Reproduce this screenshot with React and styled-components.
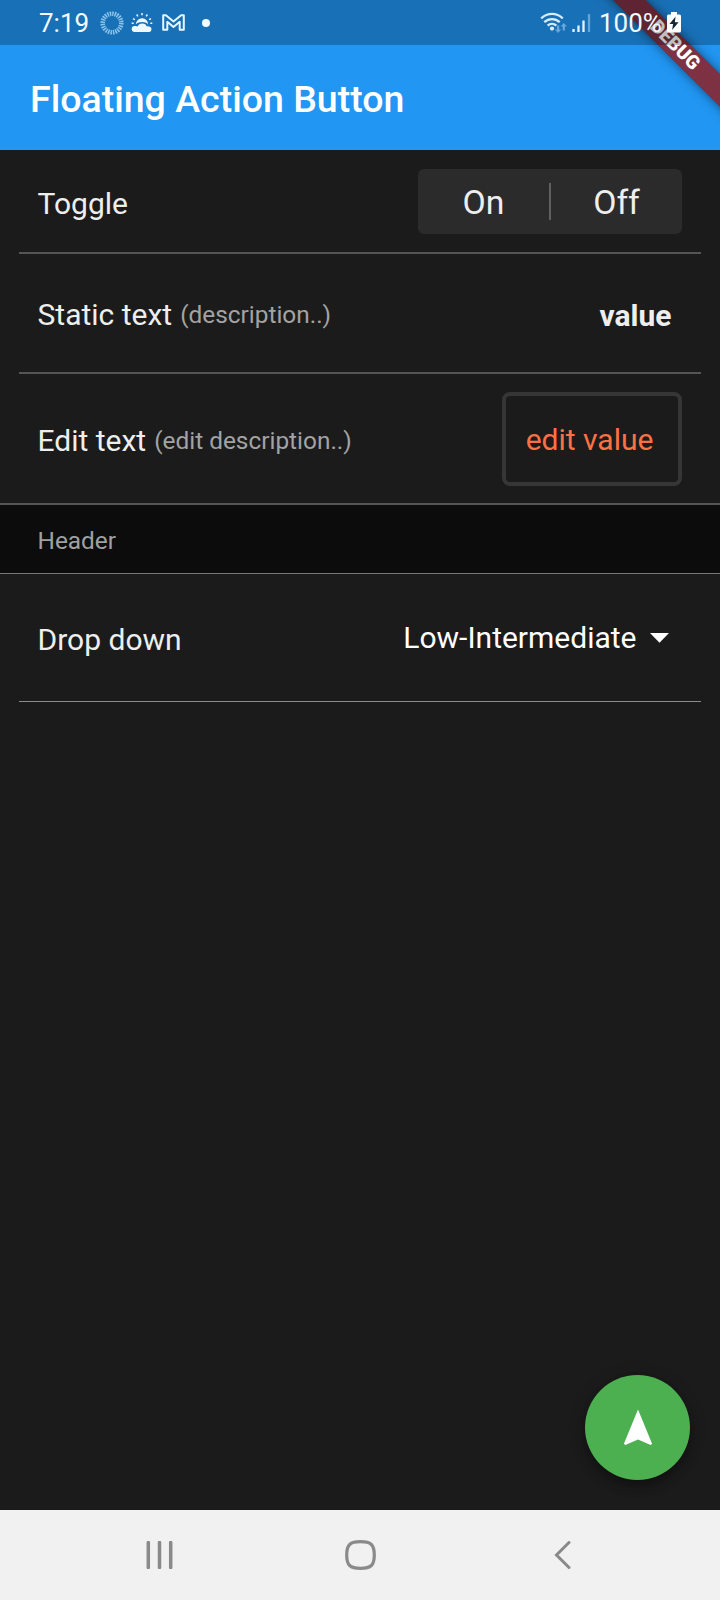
import React from "react";
import styled, { createGlobalStyle } from "styled-components";

const GlobalStyle = createGlobalStyle`
  * { box-sizing: border-box; }
  body {
    margin: 0;
    background: #1b1b1b;
    font-family: Roboto, "Liberation Sans", sans-serif;
  }
`;

const Screen = styled.div`
  width: 720px;
  height: 1600px;
  display: flex;
  flex-direction: column;
  background: #1b1b1b;
  color: #eee;
  overflow: hidden;
`;

const Header = styled.header`
  position: relative;
  height: 150px;
  flex: none;
  background: #2196f3;
  overflow: hidden;
`;

const StatusBar = styled.div`
  position: relative;
  z-index: 2;
  height: 45px;
  padding: 0 39px 0 39px;
  display: flex;
  justify-content: space-between;
  align-items: center;
  background: rgba(0, 0, 0, 0.25);
  color: #f2faff;
`;

const StatusGroup = styled.div`
  display: flex;
  align-items: center;
  height: 45px;
`;

const StatusText = styled.span`
  font-size: 26px;
  line-height: 46px;
  width: ${(p) => p.$width};
  margin-left: ${(p) => p.$gap || 0}px;
  white-space: nowrap;
`;

const Icon = styled.svg`
  display: block;
  flex: none;
  margin-left: ${(p) => p.$gap || 0}px;
`;

const Title = styled.h1`
  margin: 0;
  padding-left: 30px;
  font-size: 37.5px;
  font-weight: 500;
  line-height: 108px;
  color: #fff;
`;

const Banner = styled.div`
  position: absolute;
  z-index: 1;
  left: 575px;
  top: 34px;
  width: 200px;
  height: 22.5px;
  transform: rotate(45deg);
  background: linear-gradient(rgba(183, 28, 28, 0.66), rgba(183, 28, 28, 0.66)), rgba(0, 0, 0, 0.4);
  box-shadow: 0 0 11px rgba(0, 0, 0, 0.5);
  color: #fff;
  font-size: 19.1px;
  font-weight: 900;
  line-height: 22.5px;
  text-align: center;
`;

const Main = styled.main`
  flex: 1;
  display: flex;
  flex-direction: column;
`;

const Row = styled.div`
  height: ${(p) => p.$height}px;
  flex: none;
  margin: 0 ${(p) => (p.$full ? 0 : 19)}px;
  padding: ${(p) => (p.$full ? "0 38px 0 37.5px" : "0 19px 0 18.5px")};
  display: flex;
  justify-content: space-between;
  align-items: center;
  border-bottom: ${(p) => p.$line || "2px solid #555"};
`;

const Label = styled.span`
  font-size: 30px;
  line-height: 36px;
  padding-top: ${(p) => p.$drop || 0}px;
  white-space: nowrap;
`;

const Description = styled.small`
  position: relative;
  top: -2px;
  margin-left: 8px;
  font-size: 24.4px;
  color: #a3a3a3;
`;

const Toggle = styled.div`
  width: 264px;
  height: 65px;
  display: flex;
  align-items: center;
  border-radius: 6px;
  background: #2b2b2b;
`;

const ToggleOption = styled.button`
  width: ${(p) => p.$width}px;
  padding: 3px 0 0;
  border: 0;
  background: none;
  color: #eee;
  text-align: center;
  font: 33.75px/40px Roboto, "Liberation Sans", sans-serif;
`;

const ToggleDivider = styled.i`
  width: 2px;
  height: 37px;
  background: #606060;
`;

const Value = styled.strong`
  font-size: 30px;
  font-weight: 700;
  line-height: 36px;
  padding: 5px 10.5px 0 0;
`;

const EditBox = styled.div`
  width: 180px;
  height: 94px;
  display: flex;
  align-items: center;
  justify-content: center;
  padding: 2px 5px 0 0;
  border: 4px solid #363636;
  border-radius: 8px;
  color: #ff7043;
  font-size: 30px;
  line-height: 36px;
  white-space: nowrap;
`;

const SectionHeader = styled.h2`
  height: 69px;
  flex: none;
  margin: 0;
  padding: 3px 37.5px 0;
  border-bottom: 1px solid #777;
  background: #0c0c0c;
  color: #a0a0a0;
  font-size: 24.4px;
  font-weight: 400;
  line-height: 66px;
`;

const Select = styled.div`
  display: flex;
  align-items: center;
  padding: 0 13px 0 0;
  color: #fff;
`;

const Fab = styled.button`
  margin: auto 30px 30px auto;
  width: 105px;
  height: 105px;
  border: 0;
  border-radius: 50%;
  padding: 0 0 1px;
  display: grid;
  place-items: center;
  background: #4caf50;
  box-shadow: 0 7px 10px rgba(0, 0, 0, 0.25), 0 2px 18px rgba(0, 0, 0, 0.16);
`;

const NavBar = styled.nav`
  height: 90px;
  flex: none;
  padding: 0 149px 0 146px;
  display: grid;
  grid-template-columns: 1fr 31px 390px;
  grid-template-columns: 199px 31px 1fr;
  align-items: center;
  justify-items: start;
  background: #f1f1f1;

  > :last-child {
    justify-self: end;
  }
`;

const RingIcon = () => (
  <Icon width="24" height="24" viewBox="0 0 24 24" $gap={10.5}>
    <circle cx="12" cy="12" r="9.3" fill="none" stroke="#8cc4ea" strokeWidth="4.6" strokeDasharray="1.5 0.93" />
  </Icon>
);

const WeatherIcon = () => (
  <Icon width="22" height="22" viewBox="0 0 22 22" fill="#eef8ff" $gap={7.5}>
    <path d="M3.500 20a3 3 0 0 1 .4-6c1-.2 2 0 2.700.4.900-2 2.400-3 4.700-3s3.900 1.200 4.500 3c2.700-.2 4.700.8 4.700 2.800S19.200 20 17 20Z" />
    <path d="M4.800 12.200a6.200 6.200 0 0 1 12.400 .5c-1-1.800-3-2.700-5.900-2.700-2.600 0-4.900.7-6.500 2.200Z" />
    <g stroke="#eef8ff" strokeWidth="1.500">
      <path d="M11 1v2.300M5.700 2.500l1.100 1.800M16.300 2.500l-1.100 1.800M2 6.700l1.900 1M20 6.700l-1.900 1M.7 11.300h2M19.300 11.300h2" />
    </g>
  </Icon>
);

const MailIcon = () => (
  <Icon width="23" height="19" viewBox="0 0 23 19" $gap={9}>
    <path d="M1.200 16.700V2.200h2.700l7.600 6.200 7.600-6.200h2.700v14.500h-4.100V8.800l-6.200 5.100-6.200-5.100v7.900Z" fill="none" stroke="#e6f5ff" strokeWidth="2" strokeLinejoin="round" />
  </Icon>
);

const DotIcon = () => (
  <Icon width="8" height="8" viewBox="0 0 8 8" $gap={17}>
    <circle cx="4" cy="4" r="4" fill="#f2faff" />
  </Icon>
);

const WifiIcon = () => (
  <Icon width="28" height="22" viewBox="0 0 28 22">
    <g fill="none" stroke="#d5ecfb" strokeWidth="2.300">
      <path d="M1.200 6.300C7.500.400 16.500.400 22.800 6.300M4.300 10.200c4.500-4.200 10.900-4.200 15.400 0M7.600 13.700c2.600-2.400 6.200-2.400 8.800 0" />
    </g>
    <circle cx="12" cy="16.600" r="2.100" fill="#d5ecfb" />
    <path d="M17 13.500h2.200v4h2L18.100 21 15 17.500h2ZM22.700 18.500h2.200v-4h2L23.800 11l-3.100 3.500h2Z" fill="#69a9da" />
  </Icon>
);

const SignalIcon = () => (
  <Icon width="20" height="20" viewBox="0 0 20 20" $gap={4}>
    <path d="M1.500 16v3M6.500 12.500V19M11.500 7.500V19" stroke="#e4f3fd" strokeWidth="2.300" />
    <path d="M17 1v18" stroke="#62a5d6" strokeWidth="2.300" />
  </Icon>
);

const BatteryIcon = () => (
  <Icon width="14" height="21" viewBox="0 0 14 21">
    <path d="M4 0h6v2.500h2.500A1.500 1.500 0 0 1 14 4v15a1.500 1.500 0 0 1-1.500 1.500h-11A1.500 1.500 0 0 1 0 19V4a1.500 1.500 0 0 1 1.500-1.500H4Z" fill="#fff" />
    <path d="M8.600 4.500 2.500 12h3.600l-1 6 6.500-7.700H7.800Z" fill="#182634" />
  </Icon>
);

const CaretIcon = () => (
  <Icon width="19" height="10" viewBox="0 0 19 10" $gap={13.5}>
    <path d="M0 0h19L9.500 9.800Z" fill="#fff" />
  </Icon>
);

const NavigationIcon = () => (
  <Icon width="30" height="37" viewBox="0 0 30 37">
    <path d="M15 .5.900 34.700l1.400 1.400L15 30.500l12.700 5.600 1.400-1.400Z" fill="#fff" />
  </Icon>
);

const RecentsIcon = () => (
  <Icon width="27" height="28" viewBox="0 0 27 28">
    <path d="M2.300 1.500v25M13.500 1.500v25M24.700 1.500v25" stroke="#8a8a8a" strokeWidth="3.500" strokeLinecap="round" />
  </Icon>
);

const HomeIcon = () => (
  <Icon width="31" height="30" viewBox="0 0 31 30">
    <path d="M15.500 1.700c10.500 0 13.800 3 13.800 13.300s-3.300 13.300-13.800 13.300S1.700 25.300 1.700 15 5 1.700 15.500 1.700Z" fill="none" stroke="#8a8a8a" strokeWidth="3.200" />
  </Icon>
);

const BackIcon = () => (
  <Icon width="17" height="28" viewBox="0 0 17 28">
    <path d="M15 1.500 2.500 14 15 26.500" fill="none" stroke="#8a8a8a" strokeWidth="3" strokeLinecap="round" />
  </Icon>
);

export default function App() {
  return (
    <Screen>
      <GlobalStyle />
      <Header>
        <StatusBar>
          <StatusGroup>
            <StatusText $width="50px">7:19</StatusText>
            <RingIcon />
            <WeatherIcon />
            <MailIcon />
            <DotIcon />
          </StatusGroup>
          <StatusGroup>
            <WifiIcon />
            <SignalIcon />
            <StatusText $width="68px" $gap={7}>100%</StatusText>
            <BatteryIcon />
          </StatusGroup>
        </StatusBar>
        <Title>Floating Action Button</Title>
        <Banner>DEBUG</Banner>
      </Header>
      <Main>
        <Row $height={104}>
          <Label $drop={5}>Toggle</Label>
          <Toggle>
            <ToggleOption $width={131}>On</ToggleOption>
            <ToggleDivider />
            <ToggleOption $width={131}>Off</ToggleOption>
          </Toggle>
        </Row>
        <Row $height={120}>
          <Label $drop={6}>
            Static text<Description>(description..)</Description>
          </Label>
          <Value>value</Value>
        </Row>
        <Row $height={131} $full>
          <Label $drop={6}>
            Edit text<Description>(edit description..)</Description>
          </Label>
          <EditBox>edit value</EditBox>
        </Row>
        <SectionHeader>Header</SectionHeader>
        <Row $height={128} $line="1px solid #8a8a8a">
          <Label $drop={5}>Drop down</Label>
          <Select>
            <Label>Low-Intermediate</Label>
            <CaretIcon />
          </Select>
        </Row>
        <Fab aria-label="Navigate">
          <NavigationIcon />
        </Fab>
      </Main>
      <NavBar>
        <RecentsIcon />
        <HomeIcon />
        <BackIcon />
      </NavBar>
    </Screen>
  );
}
